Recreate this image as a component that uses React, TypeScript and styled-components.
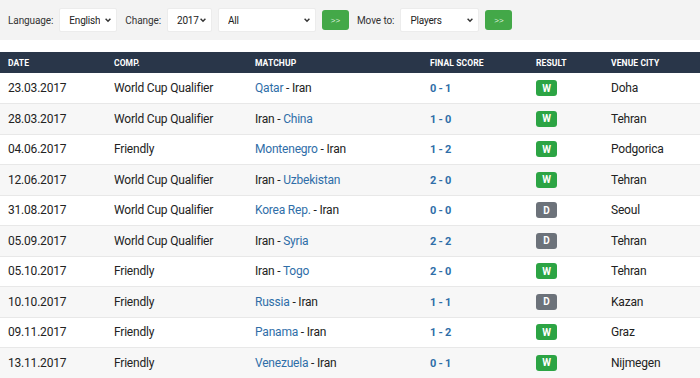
import styled, { createGlobalStyle } from "styled-components";

const GlobalStyle = createGlobalStyle`
	body {
		margin: 0;
		background: #fff;
		font-family: Roboto, "Liberation Sans", sans-serif;
		color: #222;
	}
`;

type Match = {
	date: string;
	comp: string;
	home: string;
	away: string;
	score: string;
	result: "W" | "D";
	city: string;
};

const matches: Match[] = [
	{ date: "23.03.2017", comp: "World Cup Qualifier", home: "Qatar", away: "Iran", score: "0 - 1", result: "W", city: "Doha" },
	{ date: "28.03.2017", comp: "World Cup Qualifier", home: "Iran", away: "China", score: "1 - 0", result: "W", city: "Tehran" },
	{ date: "04.06.2017", comp: "Friendly", home: "Montenegro", away: "Iran", score: "1 - 2", result: "W", city: "Podgorica" },
	{ date: "12.06.2017", comp: "World Cup Qualifier", home: "Iran", away: "Uzbekistan", score: "2 - 0", result: "W", city: "Tehran" },
	{ date: "31.08.2017", comp: "World Cup Qualifier", home: "Korea Rep.", away: "Iran", score: "0 - 0", result: "D", city: "Seoul" },
	{ date: "05.09.2017", comp: "World Cup Qualifier", home: "Iran", away: "Syria", score: "2 - 2", result: "D", city: "Tehran" },
	{ date: "05.10.2017", comp: "Friendly", home: "Iran", away: "Togo", score: "2 - 0", result: "W", city: "Tehran" },
	{ date: "10.10.2017", comp: "Friendly", home: "Russia", away: "Iran", score: "1 - 1", result: "D", city: "Kazan" },
	{ date: "09.11.2017", comp: "Friendly", home: "Panama", away: "Iran", score: "1 - 2", result: "W", city: "Graz" },
	{ date: "13.11.2017", comp: "Friendly", home: "Venezuela", away: "Iran", score: "0 - 1", result: "W", city: "Nijmegen" },
];

const Toolbar = styled.div`
	display: flex;
	align-items: center;
	gap: 6px;
	height: 40px;
	padding: 0 8px;
	background: #f3f3f3;
	font-size: 10px;
	letter-spacing: -0.1px;
	color: #333;
`;

const Label = styled.span`
	&:not(:first-child) {
		margin-left: 2px;
	}
`;

const Select = styled.div<{ $w: number }>`
	display: flex;
	align-items: center;
	justify-content: space-between;
	box-sizing: border-box;
	width: ${(p) => p.$w}px;
	height: 24px;
	padding: 0 4px 0 9px;
	background: #fff;
	border: 1px solid #ececec;
	border-radius: 2px;
	font-size: 10px;
	letter-spacing: -0.2px;
	color: #222;
	span {
		overflow: hidden;
		white-space: nowrap;
	}
`;

const Caret = styled.svg`
	width: 8px;
	height: 8px;
	flex-shrink: 0;
`;

const GoButton = styled.button`
	width: 27px;
	height: 20px;
	padding: 0;
	border: none;
	border-radius: 3px;
	background: #43a848;
	color: #dff0df;
	font-size: 8px;
	font-family: "Liberation Sans", Arial, sans-serif;
`;

const Table = styled.table`
	width: 100%;
	margin-top: 12px;
	border-collapse: collapse;
	table-layout: fixed;
	font-size: 12px;
`;

const Th = styled.th<{ $w?: number }>`
	width: ${(p) => (p.$w ? `${p.$w}px` : "auto")};
	height: 21px;
	padding: 0 8px;
	background: #293649;
	color: #fff;
	font-size: 8.5px;
	font-weight: 700;
	text-align: left;
	text-transform: uppercase;
	letter-spacing: 0.1px;
	white-space: nowrap;
`;

const Row = styled.tr`
	height: 30.5px;
	border-bottom: 1px solid #e8e8e8;
	&:nth-child(even) {
		background: #f7f7f7;
	}
`;

const Td = styled.td`
	padding: 0 8px;
	letter-spacing: -0.2px;
	white-space: nowrap;
`;

const TeamLink = styled.a`
	color: #2f6ea8;
	text-decoration: none;
`;

const Score = styled.span`
	color: #2f6ea8;
	font-size: 11px;
	font-weight: 700;
	letter-spacing: -0.3px;
`;

const Badge = styled.span<{ $result: "W" | "D" }>`
	display: inline-flex;
	align-items: center;
	justify-content: center;
	width: 21px;
	height: 16px;
	border-radius: 3px;
	background: ${(p) => (p.$result === "W" ? "#2ca444" : "#6c727a")};
	color: #fff;
	font-size: 10px;
	font-weight: 700;
`;

function Dropdown({ value, width }: { value: string; width: number }) {
	return (
		<Select $w={width}>
			<span>{value}</span>
			<Caret viewBox="0 0 10 10">
				<path d="M2 3.5 L5 6.5 L8 3.5" fill="none" stroke="#333" strokeWidth="1.8" />
			</Caret>
		</Select>
	);
}

function Team({ name }: { name: string }) {
	if (name === "Iran") return <>{name}</>;
	return <TeamLink href="#">{name}</TeamLink>;
}

export default function App() {
	return (
		<>
			<GlobalStyle />
			<Toolbar>
				<Label>Language:</Label>
				<Dropdown value="English" width={58} />
				<Label>Change:</Label>
				<Dropdown value="2017" width={45} />
				<Dropdown value="All" width={98} />
				<GoButton>&gt;&gt;</GoButton>
				<Label>Move to:</Label>
				<Dropdown value="Players" width={79} />
				<GoButton>&gt;&gt;</GoButton>
			</Toolbar>
			<Table>
				<thead>
					<tr>
						<Th $w={90}>Date</Th>
						<Th $w={125}>Comp.</Th>
						<Th $w={159}>Matchup</Th>
						<Th $w={90}>Final score</Th>
						<Th $w={59}>Result</Th>
						<Th>Venue city</Th>
					</tr>
				</thead>
				<tbody>
					{matches.map((m) => (
						<Row key={m.date}>
							<Td>{m.date}</Td>
							<Td>{m.comp}</Td>
							<Td>
								<Team name={m.home} /> - <Team name={m.away} />
							</Td>
							<Td>
								<Score>{m.score}</Score>
							</Td>
							<Td>
								<Badge $result={m.result}>{m.result}</Badge>
							</Td>
							<Td>{m.city}</Td>
						</Row>
					))}
				</tbody>
			</Table>
		</>
	);
}
